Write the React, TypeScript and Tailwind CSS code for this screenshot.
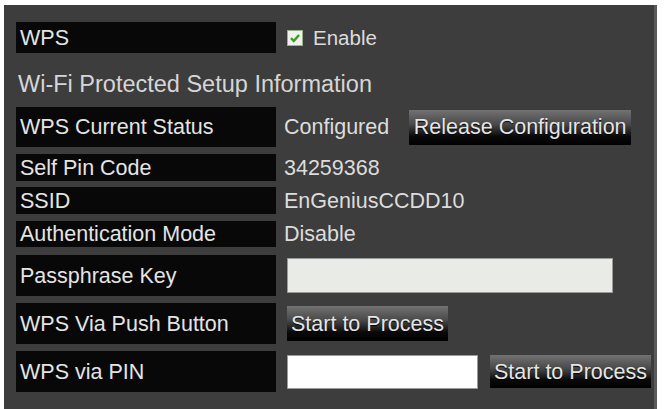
import React from "react";

const font = { fontFamily: '"Liberation Sans", Arial, sans-serif' };

function Label({ children, h }: { children: React.ReactNode; h: string }) {
  return (
    <div
      className={`w-[260px] shrink-0 bg-[#080808] pl-[4px] flex items-center text-[21.5px] leading-[24px] text-[#e4e4e4] ${h}`}
    >
      {children}
    </div>
  );
}

function Value({ children }: { children: React.ReactNode }) {
  return <span className="ml-[8px] text-[21.5px] leading-[24px] text-[#dcdcdc]">{children}</span>;
}

function GradButton({ children, className }: { children: React.ReactNode; className?: string }) {
  return (
    <button
      className={`bg-[linear-gradient(to_bottom,#727272_0%,#4a4a4a_40%,#0a0a0a_75%,#000_100%)] text-[#e6e6e6] text-[21.5px] leading-[24px] flex items-center justify-center [text-shadow:0_1px_1px_#000] ${className ?? ""}`}
    >
      {children}
    </button>
  );
}

export default function App() {
  return (
    <div className="w-[664px] h-[409px] bg-white pt-[5px] pl-[4px] overflow-hidden" style={font}>
      <div className="w-[653px] h-[404px] bg-[#3d3d3d] pl-[12px] pt-[17px] border-r-[3px] border-[#5a5a5a]">
        {/* WPS enable */}
        <div className="flex items-center">
          <Label h="h-[31px]">WPS</Label>
          <div className="ml-[11px] flex items-center gap-[10px]">
            <span className="w-[16px] h-[16px] bg-[#eef2ea] border border-[#9ab08a] flex items-center justify-center">
              <svg viewBox="0 0 12 12" className="w-[12px] h-[12px]">
                <path d="M2 6.2 L4.8 9 L10 3" fill="none" stroke="#3f9a2c" strokeWidth="2.4" />
              </svg>
            </span>
            <span className="text-[20.5px] leading-[24px] text-[#dcdcdc]">Enable</span>
          </div>
        </div>

        <div className="mt-[16px] ml-[2px] text-[23.5px] text-[#d6d6d6] leading-[30px]">
          Wi-Fi Protected Setup Information
        </div>

        {/* current status */}
        <div className="mt-[8px] flex items-center">
          <Label h="h-[40px]">WPS Current Status</Label>
          <Value>Configured</Value>
          <GradButton className="ml-[20px] w-[222px] h-[35px]">Release Configuration</GradButton>
        </div>

        <div className="mt-[7px] flex items-center">
          <Label h="h-[27px]">Self Pin Code</Label>
          <Value>34259368</Value>
        </div>

        <div className="mt-[6px] flex items-center">
          <Label h="h-[27px]">SSID</Label>
          <Value>EnGeniusCCDD10</Value>
        </div>

        <div className="mt-[7px] flex items-center">
          <Label h="h-[26px]">Authentication Mode</Label>
          <Value>Disable</Value>
        </div>

        <div className="mt-[8px] flex items-center">
          <Label h="h-[41px]">Passphrase Key</Label>
          <input className="ml-[11px] w-[326px] h-[35px] bg-[#e9ebe6] border border-[#9a9a9a] outline-none" />
        </div>

        <div className="mt-[7px] flex items-center">
          <Label h="h-[41px]">WPS Via Push Button</Label>
          <GradButton className="ml-[11px] w-[161px] h-[35px]">Start to Process</GradButton>
        </div>

        <div className="mt-[7px] flex items-center">
          <Label h="h-[41px]">WPS via PIN</Label>
          <input className="ml-[11px] w-[191px] h-[34px] bg-white border border-[#9a9a9a] outline-none" />
          <GradButton className="ml-[12px] w-[161px] h-[33px]">Start to Process</GradButton>
        </div>
      </div>
    </div>
  );
}
